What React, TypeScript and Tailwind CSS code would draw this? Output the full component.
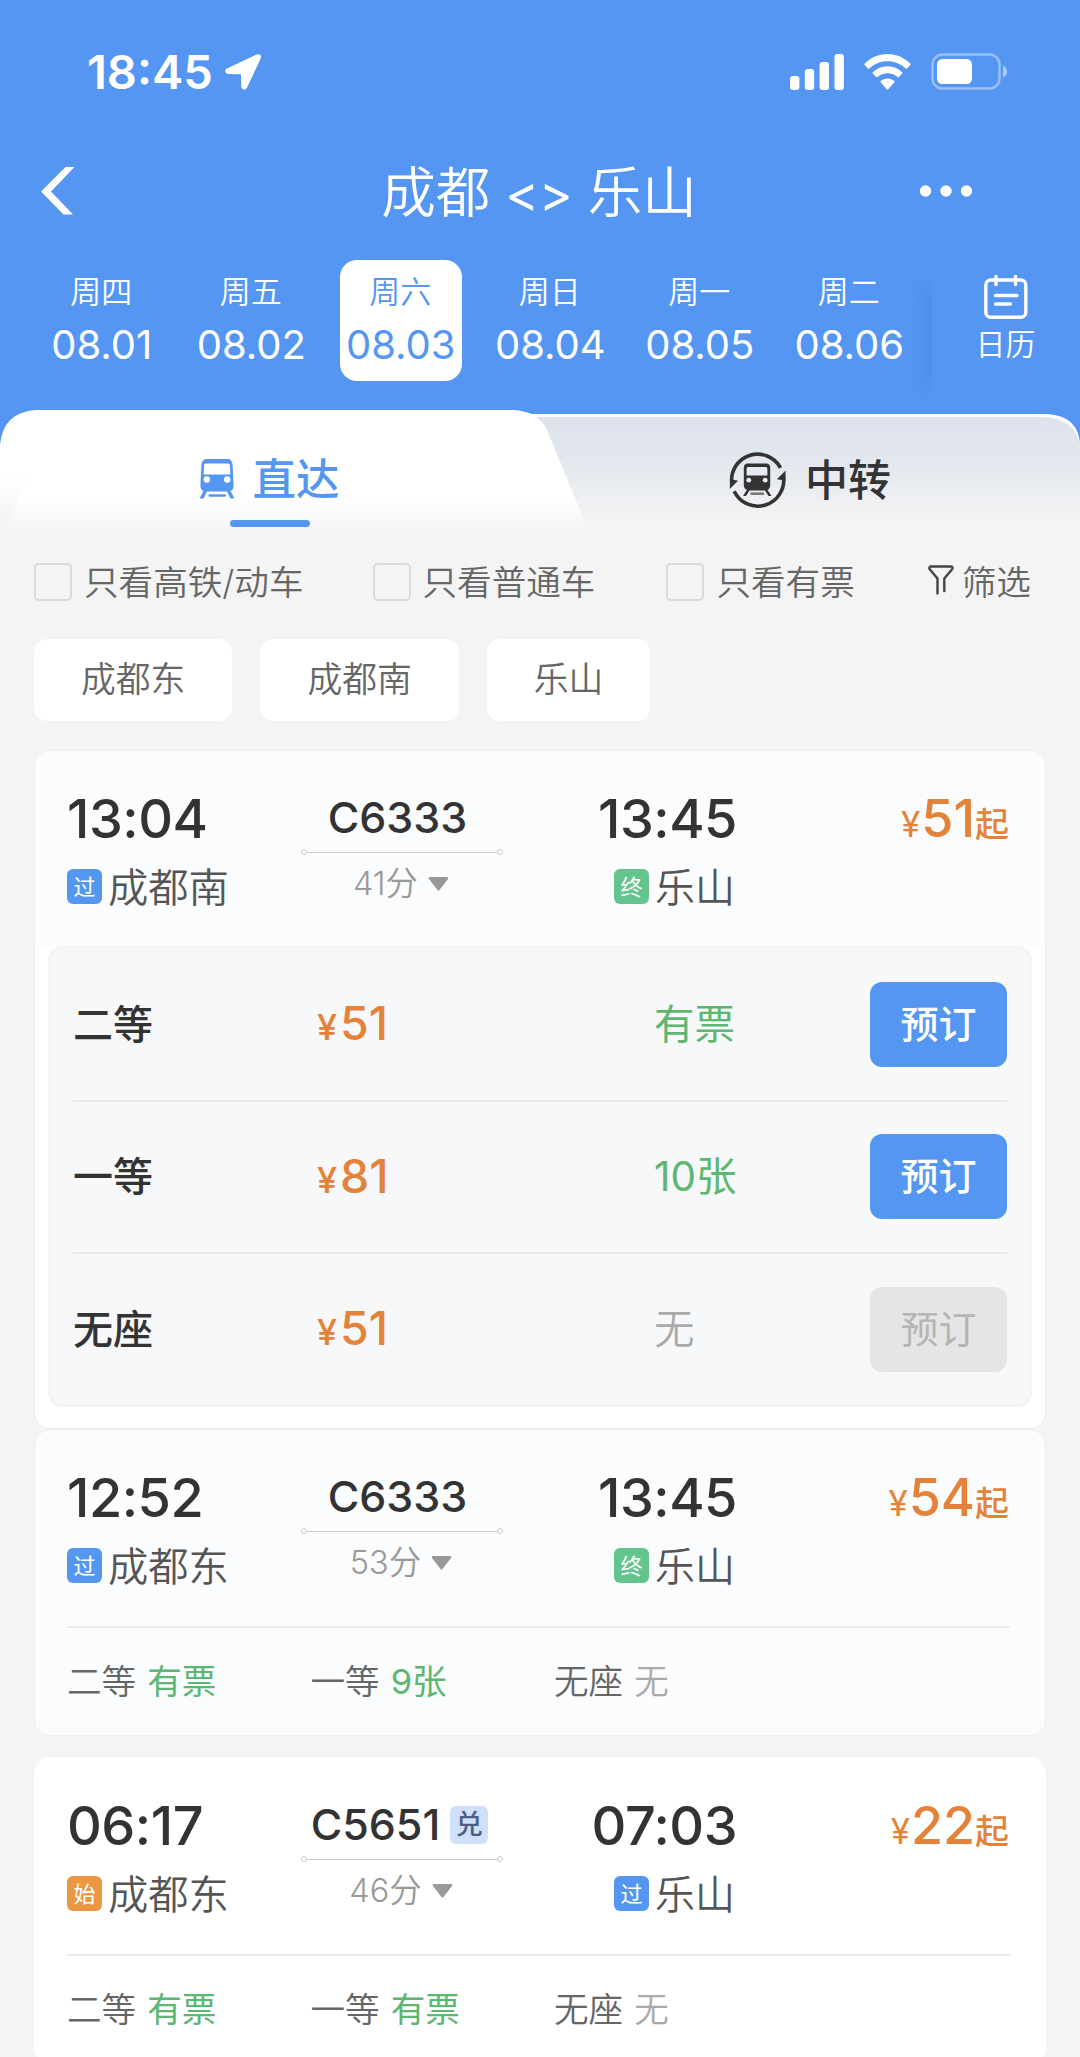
import { useState } from "react";

type Seat = { name: string; price: string; left: string };

type Train = {
  id: string;
  start: string;
  end: string;
  from: string;
  to: string;
  fromTag: string;
  toTag: string;
  duration: string;
  price: string;
  exchange?: boolean;
  seats: Seat[];
};

const days = [
  { week: "周四", date: "08.01" },
  { week: "周五", date: "08.02" },
  { week: "周六", date: "08.03" },
  { week: "周日", date: "08.04" },
  { week: "周一", date: "08.05" },
  { week: "周二", date: "08.06" },
];

const trains: Train[] = [
  {
    id: "C6333",
    start: "13:04",
    end: "13:45",
    from: "成都南",
    to: "乐山",
    fromTag: "过",
    toTag: "终",
    duration: "41分",
    price: "51",
    seats: [
      { name: "二等", price: "51", left: "有票" },
      { name: "一等", price: "81", left: "10张" },
      { name: "无座", price: "51", left: "无" },
    ],
  },
  {
    id: "C6333",
    start: "12:52",
    end: "13:45",
    from: "成都东",
    to: "乐山",
    fromTag: "过",
    toTag: "终",
    duration: "53分",
    price: "54",
    seats: [
      { name: "二等", price: "54", left: "有票" },
      { name: "一等", price: "86", left: "9张" },
      { name: "无座", price: "54", left: "无" },
    ],
  },
  {
    id: "C5651",
    start: "06:17",
    end: "07:03",
    from: "成都东",
    to: "乐山",
    fromTag: "始",
    toTag: "过",
    duration: "46分",
    price: "22",
    exchange: true,
    seats: [
      { name: "二等", price: "22", left: "有票" },
      { name: "一等", price: "35", left: "有票" },
      { name: "无座", price: "22", left: "无" },
    ],
  },
];

const tagColors: Record<string, string> = {
  过: "bg-[#5596f0]",
  终: "bg-[#64c48d]",
  始: "bg-[#ea9744]",
};

const StatusBar = () => (
  <div className="flex h-[144px] items-center pl-[87px] pr-[72px] text-white">
    <div className="text-[47px] leading-[60px] font-semibold">18:45</div>
    <svg className="ml-[11px]" width="38" height="38" viewBox="0 0 38 38">
      <path
        d="M3.5 16.5 L33 2.6 Q36.6 1.6 35.6 5 L22 34 Q20 37 18.5 34 L18.2 21.5 Q18 20 16.5 20 L4 19.8 Q1 18.5 3.5 16.5Z"
        fill="#fff"
        stroke="#fff"
        strokeWidth="2.4"
        strokeLinejoin="round"
      />
    </svg>
    <div className="ml-auto flex items-center">
      <svg width="54" height="36" viewBox="0 0 54 36" fill="#fff">
        <rect x="0" y="22" width="9.4" height="14" rx="3" />
        <rect x="14.8" y="15" width="9.4" height="21" rx="3" />
        <rect x="29.6" y="8" width="9.4" height="28" rx="3" />
        <rect x="44.5" y="0" width="9.4" height="36" rx="3" />
      </svg>
      <svg className="ml-5" width="47" height="36" viewBox="0 0 47 36" fill="#fff">
        <path d="M23.5 0 C32.5 0 40.5 3.6 46.4 9.8 Q47 10.4 46.4 11 L43 14.6 Q42.4 15.2 41.8 14.6 C37 9.8 30.6 7.2 23.5 7.2 C16.4 7.2 10 9.8 5.2 14.6 Q4.6 15.2 4 14.6 L.6 11 Q0 10.4 .6 9.8 C6.5 3.6 14.5 0 23.5 0Z" />
        <path d="M23.5 12.2 C29.2 12.2 34.4 14.4 38.2 18.2 Q38.8 18.8 38.2 19.4 L34.8 23 Q34.2 23.6 33.6 23 C31 20.6 27.4 19.2 23.5 19.2 C19.6 19.2 16 20.6 13.4 23 Q12.8 23.6 12.2 23 L8.8 19.4 Q8.2 18.8 8.8 18.2 C12.6 14.4 17.8 12.2 23.5 12.2Z" />
        <path d="M23.5 24.4 C26.2 24.4 28.6 25.4 30.3 27 Q31 27.6 30.4 28.3 L24.2 35.2 Q23.5 36 22.8 35.2 L16.6 28.3 Q16 27.6 16.7 27 C18.4 25.4 20.8 24.4 23.5 24.4Z" />
      </svg>
      <svg className="ml-[20px]" width="77" height="38" viewBox="0 0 77 38">
        <rect x="1.5" y="1.5" width="67" height="34" rx="10" fill="none" stroke="#fff" strokeOpacity=".4" strokeWidth="2.4" />
        <rect x="6" y="6" width="35" height="25" rx="5.5" fill="#fff" />
        <path d="M72 12.5 C75.5 14 76 17 76 18.5 C76 20 75.5 23 72 24.5Z" fill="#fff" fillOpacity=".5" />
      </svg>
    </div>
  </div>
);

const NavBar = () => (
  <div className="flex h-[94px] items-center justify-between pl-[41px] pr-[108px] text-white">
    <svg width="35" height="48" viewBox="0 0 35 48">
      <path d="M24.5 0 H33.5 L10 24.5 L32 47.5 H22.5 L0 24.5Z" fill="#fff" />
    </svg>
    <h1 className="ml-[82px] flex gap-[15px] pt-[3px] text-[54.5px] leading-[64px] font-[350]">
      <span>成都</span>
      <span className="pt-[2px] text-[51px] font-normal">&lt;&gt;</span>
      <span>乐山</span>
    </h1>
    <svg width="52" height="14" viewBox="0 0 52 14" fill="#fff">
      <circle cx="5.5" cy="7" r="5.7" />
      <circle cx="26" cy="7" r="5.7" />
      <circle cx="46.5" cy="7" r="5.7" />
    </svg>
  </div>
);

const DayBar = () => {
  const [selected, setSelected] = useState("08.03");
  return (
    <div className="mt-[22px] flex h-[150px]">
      <div className="flex flex-1 gap-7 overflow-hidden pl-[41px]">
        {days.map((day) => (
          <button
            key={day.date}
            onClick={() => setSelected(day.date)}
            className={
              "flex h-[121px] w-[121.5px] shrink-0 flex-col items-center rounded-[17px] pt-[13px] " +
              (day.date === selected ? "bg-white text-[#5596f3]" : "text-white")
            }
          >
            <span className="mr-[1px] text-[31px] leading-[38px] font-[350]">{day.week}</span>
            <span className="mt-[10px] text-[40px] leading-[48px] font-[430]">{day.date}</span>
          </button>
        ))}
      </div>
      <div className="relative flex w-[148px] flex-col items-center pt-[15px] text-white">
        <div className="absolute top-[16px] -left-5 h-[122px] w-5 bg-linear-to-r from-[#4f8ce400] to-[#4f8ce4cc] mask-y-from-80%"></div>
        <svg width="44" height="44" viewBox="0 0 44 44" fill="none" stroke="#fff" strokeWidth="3.4" strokeLinecap="round">
          <rect x="1.8" y="5" width="40" height="37.2" rx="5" />
          <path d="M12 1.5 V9.5 M31.5 1.5 V9.5 M11.5 20.5 H33 M11.5 29 H26.5" />
        </svg>
        <span className="mt-[6px] mr-[1px] text-[30px] leading-[38px] font-[350]">日历</span>
      </div>
    </div>
  );
};

const TrainIcon = () => (
  <svg width="36" height="41" viewBox="0 0 36 41">
    <path d="M7 0 H29 Q33 .5 33.6 6 L34.6 26 Q34.8 31 31.5 32 L35.5 39.5 H31.5 L28 32.6 H8 L4.5 39.5 H.5 L4.5 32 Q1.2 31 1.4 26 L2.4 6 Q3 .5 7 0Z" fill="#5596f3" />
    <path d="M7 4.5 H29 Q30.8 4.7 31 6.5 L31.3 15.5 H4.7 L5 6.5 Q5.2 4.7 7 4.5Z" fill="#fff" />
    <circle cx="7.8" cy="20.5" r="3.2" fill="#fff" />
    <circle cx="28.2" cy="20.5" r="3.2" fill="#fff" />
    <rect x="9.5" y="35.3" width="17.5" height="2.4" rx="1.2" fill="#5596f3" />
  </svg>
);

const TransferIcon = () => (
  <svg width="58" height="58" viewBox="0 0 58 58" fill="#333">
    <path d="M51.5 16.8 A26 26 0 0 0 2.9 33" fill="none" stroke="#333" strokeWidth="3.6" />
    <path d="M5.2 40.2 A26 26 0 0 0 54.4 25" fill="none" stroke="#333" strokeWidth="3.6" />
    <path d="M.8 38 L1 28 L9 29.8Z M56.6 19.5 L56.4 29.5 L47.8 28.2Z" />
    <path d="M18 12.5 H38 Q41 13 41.2 16.5 V34.5 Q41 38 38.5 38.8 L42.5 45 H39.5 L36 39.5 H20.5 L17 45 H14 L18 38.8 Q15 38 14.8 34.5 V16.5 Q15 13 18 12.5Z" />
    <path d="M18.8 16 H37.2 Q38.4 16.3 38.4 18 V24.5 H17.6 V18 Q17.6 16.3 18.8 16Z" fill="#e6e9ef" />
    <circle cx="19.8" cy="29.2" r="2.4" fill="#e9ebef" />
    <circle cx="36.2" cy="29.2" r="2.4" fill="#e9ebef" />
    <rect x="21.5" y="41.4" width="13.5" height="2.6" fill="#777" />
  </svg>
);

const Tabs = () => (
  <div className="relative h-[131px]">
    <svg className="absolute inset-0" width="1080" height="131" viewBox="0 0 1080 131">
      <defs>
        <linearGradient id="sideTab" x1="0" y1="0" x2="0" y2="1">
          <stop offset="0" stopColor="#dde3ee" />
          <stop offset=".35" stopColor="#e3e7ee" />
          <stop offset=".85" stopColor="#f3f4f4" />
          <stop offset="1" stopColor="#f4f4f4" />
        </linearGradient>
        <linearGradient id="mainTab" x1="0" y1="0" x2="0" y2="1">
          <stop offset="0" stopColor="#fff" />
          <stop offset=".66" stopColor="#fff" />
          <stop offset=".94" stopColor="#f4f4f4" />
        </linearGradient>
        <linearGradient id="leftEdge" x1="0" y1="0" x2="0" y2="1">
          <stop offset="0" stopColor="#f3f5f7" stopOpacity="0" />
          <stop offset="1" stopColor="#f3f4f6" />
        </linearGradient>
      </defs>
      <path d="M500 4 H1047 Q1080 6 1080 37 V131 H500Z" fill="#fff" />
      <path d="M500 7 H1044 Q1077 9 1080 37 V131 H500Z" fill="url(#sideTab)" />
      <path d="M0 131 V35 Q3 2 36 0 H513 Q538 1 547 20 L589 122 V131Z" fill="url(#mainTab)" />
      <path d="M0 60 H31 L4 122 H0Z" fill="url(#leftEdge)" />
    </svg>
    <div className="relative flex items-start">
      <button className="flex w-[540px] flex-col items-center pt-[41px] text-[#5596f3]">
        <span className="mr-[2px] flex items-center">
          <TrainIcon />
          <span className="ml-[18px] pt-px text-[43.5px] leading-[55px] font-medium">直达</span>
        </span>
        <span className="mt-[13px] h-[7px] w-20 rounded-full bg-[#5596f3]"></span>
      </button>
      <button className="flex flex-1 items-center justify-center pt-[41px] text-[#333]">
        <TransferIcon />
        <span className="ml-[18px] text-[43px] leading-[56px] font-medium">中转</span>
      </button>
    </div>
  </div>
);

const CheckFilter = ({ label }: { label: string }) => (
  <label className="flex items-center">
    <span className="h-[38px] w-[38px] rounded-[5px] border-[2.5px] border-[#dadada]"></span>
    <span className="ml-[12px] text-[34.6px] leading-[44px] font-[350]">{label}</span>
  </label>
);

const Filters = () => (
  <div className="pl-[34px] text-[#666]">
    <div className="mt-[19px] flex h-[44px] items-center">
      <CheckFilter label="只看高铁/动车" />
      <div className="ml-[69px]">
        <CheckFilter label="只看普通车" />
      </div>
      <div className="ml-[71px]">
        <CheckFilter label="只看有票" />
      </div>
      <div className="ml-[73px] flex items-center">
        <svg className="-mt-1" width="26" height="30" viewBox="0 0 26 30" fill="none" stroke="#444" strokeWidth="2.4" strokeLinejoin="round" strokeLinecap="round">
          <path d="M9.5 28.5 V13.5 L1.5 4 Q1 1.5 3 1.5 H23 Q25 1.5 24.3 4 L16.3 13.5 V26" />
        </svg>
        <span className="ml-[8px] text-[34.6px] leading-[44px] font-[350]">筛选</span>
      </div>
    </div>
    <div className="mt-[35px] flex gap-7">
      {["成都东", "成都南", "乐山"].map((station) => (
        <button
          key={station}
          className="h-[82px] rounded-[13px] bg-white px-[47px] pb-[2px] text-[34.8px] leading-[44px] font-[350]"
        >
          {station}
        </button>
      ))}
    </div>
  </div>
);

const StationTag = ({ tag }: { tag: string }) => (
  <span
    className={
      "mb-[3px] flex h-[35px] w-[35px] items-center justify-center rounded-[6px] text-[22px] leading-none text-white " +
      tagColors[tag]
    }
  >
    {tag}
  </span>
);

const Summary = ({ train }: { train: Train }) => (
  <div className="flex h-[196px] pt-[35px] pr-[35px] pl-8">
    <div className="w-[200px]">
      <div className="text-[54px] leading-[66px] font-[460] tracking-[-0.5px] text-[#333]">{train.start}</div>
      <div className="mt-[11px] flex h-[50px] items-center">
        <StationTag tag={train.fromTag} />
        <span className="ml-[6px] text-[40.3px] leading-[50px] font-[350] text-[#555]">{train.from}</span>
      </div>
    </div>
    <div className="ml-[34px] flex w-[202px] flex-col items-center">
      <div className={"flex items-center text-[43px] leading-[63px] font-[450] text-[#333] " + (train.exchange ? "mr-[5px]" : "mr-[9px]")}>
        {train.id}
        {train.exchange && (
          <span className="ml-[10px] flex h-[38px] w-[38px] items-center justify-center rounded-[6px] bg-[#d0e0fb] text-[27px] leading-none text-[#4b5f82]">
            兑
          </span>
        )}
      </div>
      <div className="flex w-full items-center">
        <span className="h-[6px] w-[6px] rounded-full border border-[#ccc]"></span>
        <span className="h-px flex-1 bg-[#ccc]"></span>
        <span className="h-[6px] w-[6px] rounded-full border border-[#ccc]"></span>
      </div>
      <div className="mt-[7px] mr-[2px] flex items-center text-[32.5px] leading-[44px] font-[350] text-[#999]">
        {train.duration}
        <svg className="ml-[10px]" width="21" height="14" viewBox="0 0 21 14">
          <path d="M1.5 0 H19.5 Q21 .5 20 2 L11.5 13 Q10.5 14 9.5 13 L1 2 Q0 .5 1.5 0Z" fill="#999" />
        </svg>
      </div>
    </div>
    <div className="ml-[94px] flex w-[140px] flex-col items-end">
      <div className="text-[54px] leading-[66px] font-[460] tracking-[-0.5px] text-[#333]">{train.end}</div>
      <div className="mt-[11px] mr-[2px] flex h-[50px] items-center">
        <StationTag tag={train.toTag} />
        <span className="ml-[6px] text-[40px] leading-[50px] font-[350] text-[#555]">{train.to}</span>
      </div>
    </div>
    <div className="mr-px ml-auto text-[52px] leading-[65px] font-medium text-[#e5823a]">
      <span className="mr-[1px] text-[35px] font-normal">¥</span>
      {train.price}
      <span className="text-[34px]">起</span>
    </div>
  </div>
);

const SeatTable = ({ seats }: { seats: Seat[] }) => (
  <div className="mx-[13px] -mt-px rounded-[14px] border-[3px] border-[#f3f4f5] bg-[#f7f8fa] px-[22px]">
    {seats.map((seat, i) => (
      <div
        key={seat.name}
        className={"flex items-center " + (i > 0 ? "h-[152.4px] border-t-2 border-[#ebebeb]" : "h-[150.5px]")}
      >
        <span className="w-[244px] pt-px text-[40px] font-medium text-[#333]">{seat.name}</span>
        <span className="w-[337px] text-[46.5px] font-medium text-[#e5823a]">
          <span className="mr-[3px] text-[36px] font-[450]">¥</span>
          {seat.price}
        </span>
        <span className={"pt-[2px] text-[40.5px] " + (seat.left === "无" ? "font-[350] text-[#aaa]" : "text-[#5eb771]")}>
          {seat.left}
        </span>
        <button
          disabled={seat.left === "无"}
          className="ml-auto h-[85px] w-[137px] rounded-[12px] bg-[#5596f3] text-[38px] font-medium text-white disabled:bg-[#e5e5e5] disabled:font-normal disabled:text-[#b5b5b5]"
        >
          预订
        </button>
      </div>
    ))}
  </div>
);

const SeatRow = ({ seats }: { seats: Seat[] }) => (
  <div className="mr-[35px] ml-8 flex h-[109px] border-t-2 border-[#ebebeb] text-[34.6px] leading-[107px] font-[350] text-[#666]">
    {seats.map((seat) => (
      <div key={seat.name} className="flex w-[243.5px] shrink-0 gap-[11px]">
        <span>{seat.name}</span>
        <span className={seat.left === "无" ? "text-[#aaa]" : "font-normal text-[#5eb771]"}>{seat.left}</span>
      </div>
    ))}
  </div>
);

const App = () => {
  const [first, second, third] = trains;

  return (
    <div className="h-[2057px] w-[1080px] overflow-hidden bg-[#f4f4f4] font-['Inter','Noto_Sans_CJK_SC',sans-serif]">
      <div className="bg-[#5596f3]">
        <StatusBar />
        <NavBar />
        <DayBar />
        <Tabs />
      </div>
      <Filters />
      <div className="mt-[29px] px-[34px]">
        <div className="overflow-hidden rounded-2xl border border-[#efefef] bg-white pb-[21px]">
          <div className="bg-[#fbfcfe]">
            <Summary train={first} />
          </div>
          <SeatTable seats={first.seats} />
        </div>
        <div className="rounded-2xl border border-[#efefef] bg-[#fbfcfe]">
          <Summary train={second} />
          <SeatRow seats={second.seats} />
        </div>
        <div className="mt-[21px] rounded-2xl border border-white bg-white">
          <Summary train={third} />
          <SeatRow seats={third.seats} />
        </div>
      </div>
    </div>
  );
};

export default App;
